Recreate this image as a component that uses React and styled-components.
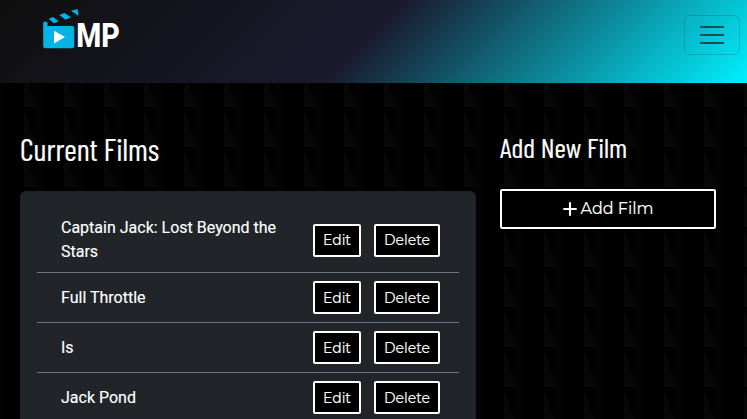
import React from "react";
import styled, { createGlobalStyle } from "styled-components";

const tile = encodeURIComponent(
  `<svg xmlns="http://www.w3.org/2000/svg" width="40" height="40"><rect width="40" height="40" fill="#000"/><rect x="10" width="10" height="40" fill="#030303"/><path d="M0 0L13.3 37H0Z" fill="#070707"/></svg>`
);

const GlobalStyle = createGlobalStyle`
  *, *::before, *::after { box-sizing: border-box; }
  html { background: #000; }
  body {
    margin: 0;
    height: 419px;
    overflow: hidden;
    color: #fff;
    font: 400 16px/24px Roboto, sans-serif;
    background: #000 url("data:image/svg+xml,${tile}") 24px 30px;
  }
`;

const Page = styled.div`
  height: 419px;
  overflow: hidden;
`;

const Header = styled.header`
  display: flex;
  justify-content: space-between;
  align-items: flex-start;
  height: 83px;
  padding: 0 7px 0 40px;
  background: linear-gradient(135deg, #0f0f0f 0%, #1a1a2e 49%, #00f0ff 100%);
`;

const Logo = styled.svg`
  display: block;
  width: 84px;
  height: 56px;
  overflow: visible;
`;

const Toggler = styled.button`
  display: flex;
  align-items: center;
  justify-content: center;
  width: 56px;
  height: 40px;
  margin-top: 15px;
  padding: 0;
  border: 1px solid rgba(33, 37, 41, 0.2);
  border-radius: 6px;
  background: transparent;
`;

const Main = styled.main`
  display: grid;
  grid-template-columns: 456px 216px;
  column-gap: 24px;
  padding: 48px 0 0 20px;
`;

const Title = styled.h2`
  height: 36px;
  margin: 0 0 24px;
  font: 400 30.5px/36px "Barlow Condensed", "Roboto Condensed", Roboto, sans-serif;
  white-space: nowrap;
  -webkit-text-stroke: 0.2px #fff;
`;

const SideTitle = styled(Title)`
  height: 33px;
  margin-bottom: 25px;
  font-size: 28px;
  line-height: 33px;
`;

const Card = styled.ul`
  list-style: none;
  margin: 0;
  padding: 16px;
  border: 1px solid #1e2125;
  border-radius: 6px;
  background: #212529;
`;

const FilmRow = styled.li`
  display: flex;
  align-items: center;
  padding: 8px 19px 8px 24px;
  border-bottom: 1px solid #6c757d;
`;

const FilmName = styled.span`
  flex: 1;
  padding-right: 24px;
  -webkit-text-stroke: 0.15px #fff;
`;

const Button = styled.button`
  display: flex;
  align-items: center;
  justify-content: center;
  width: ${(p) => p.$width};
  height: ${(p) => p.$height || "33px"};
  margin: 0 0 0 ${(p) => p.$gap || "0"};
  padding: 0;
  color: #fff;
  background: #000;
  border: 2px solid #fff;
  border-radius: 2px;
  font: 400 ${(p) => p.$size || "14px"}/20px Montserrat, Inter, sans-serif;
  -webkit-text-stroke: 0.15px #fff;
`;

const Plus = styled.svg`
  width: 14px;
  height: 14px;
  margin-right: 4px;
`;

const films = ["Captain Jack: Lost Beyond the Stars", "Full Throttle", "Is", "Jack Pond"];

function BrandLogo() {
  return (
    <Logo viewBox="0 0 84 56" role="img" aria-label="MP">
      <g fill="#02b4e6">
        <path d="M3.2 23Q3.2 21.5 5 21.5L7.5 22.2V26H32Q34.2 26 34.2 28V46Q34.2 48.2 32 48.2H5.5Q3.2 48.2 3.2 46Z" />
        <path d="M8.7 18.8L13.2 17L18.6 21.6L14 23.3Z" />
        <path d="M19.3 15L24.5 12.9L31 17.3L25.5 19.7Z" />
        <path d="M31 10.8L37.6 9L38.6 16Z" />
      </g>
      <path d="M14 30.7V43.5L25 37Z" fill="#fff" />
      <text x="36.3" y="46.8" fill="#fff" fontFamily="Roboto, sans-serif" fontSize="33" fontWeight="800" textLength="43.5" lengthAdjust="spacingAndGlyphs">MP</text>
    </Logo>
  );
}

export default function App() {
  return (
    <Page>
      <GlobalStyle />
      <Header>
        <BrandLogo />
        <Toggler aria-label="Toggle navigation">
          <svg width="30" height="30" viewBox="0 0 30 30" stroke="#212529" strokeOpacity=".75" strokeWidth="2">
            <path d="M3 7h24M3 15h24M3 23h24" />
          </svg>
        </Toggler>
      </Header>
      <Main>
        <section>
          <Title>Current Films</Title>
          <Card>
            {films.map((film) => (
              <FilmRow key={film}>
                <FilmName>{film}</FilmName>
                <Button $width="48px">Edit</Button>
                <Button $width="66px" $gap="13px">Delete</Button>
              </FilmRow>
            ))}
          </Card>
        </section>
        <aside>
          <SideTitle>Add New Film</SideTitle>
          <Button $width="216px" $height="40px" $size="16px">
            <Plus viewBox="0 0 14 14" stroke="#fff" strokeWidth="2.1" strokeLinecap="round">
              <path d="M7 1.1v11.8M1.1 7h11.8" />
            </Plus>
            Add Film
          </Button>
        </aside>
      </Main>
    </Page>
  );
}
